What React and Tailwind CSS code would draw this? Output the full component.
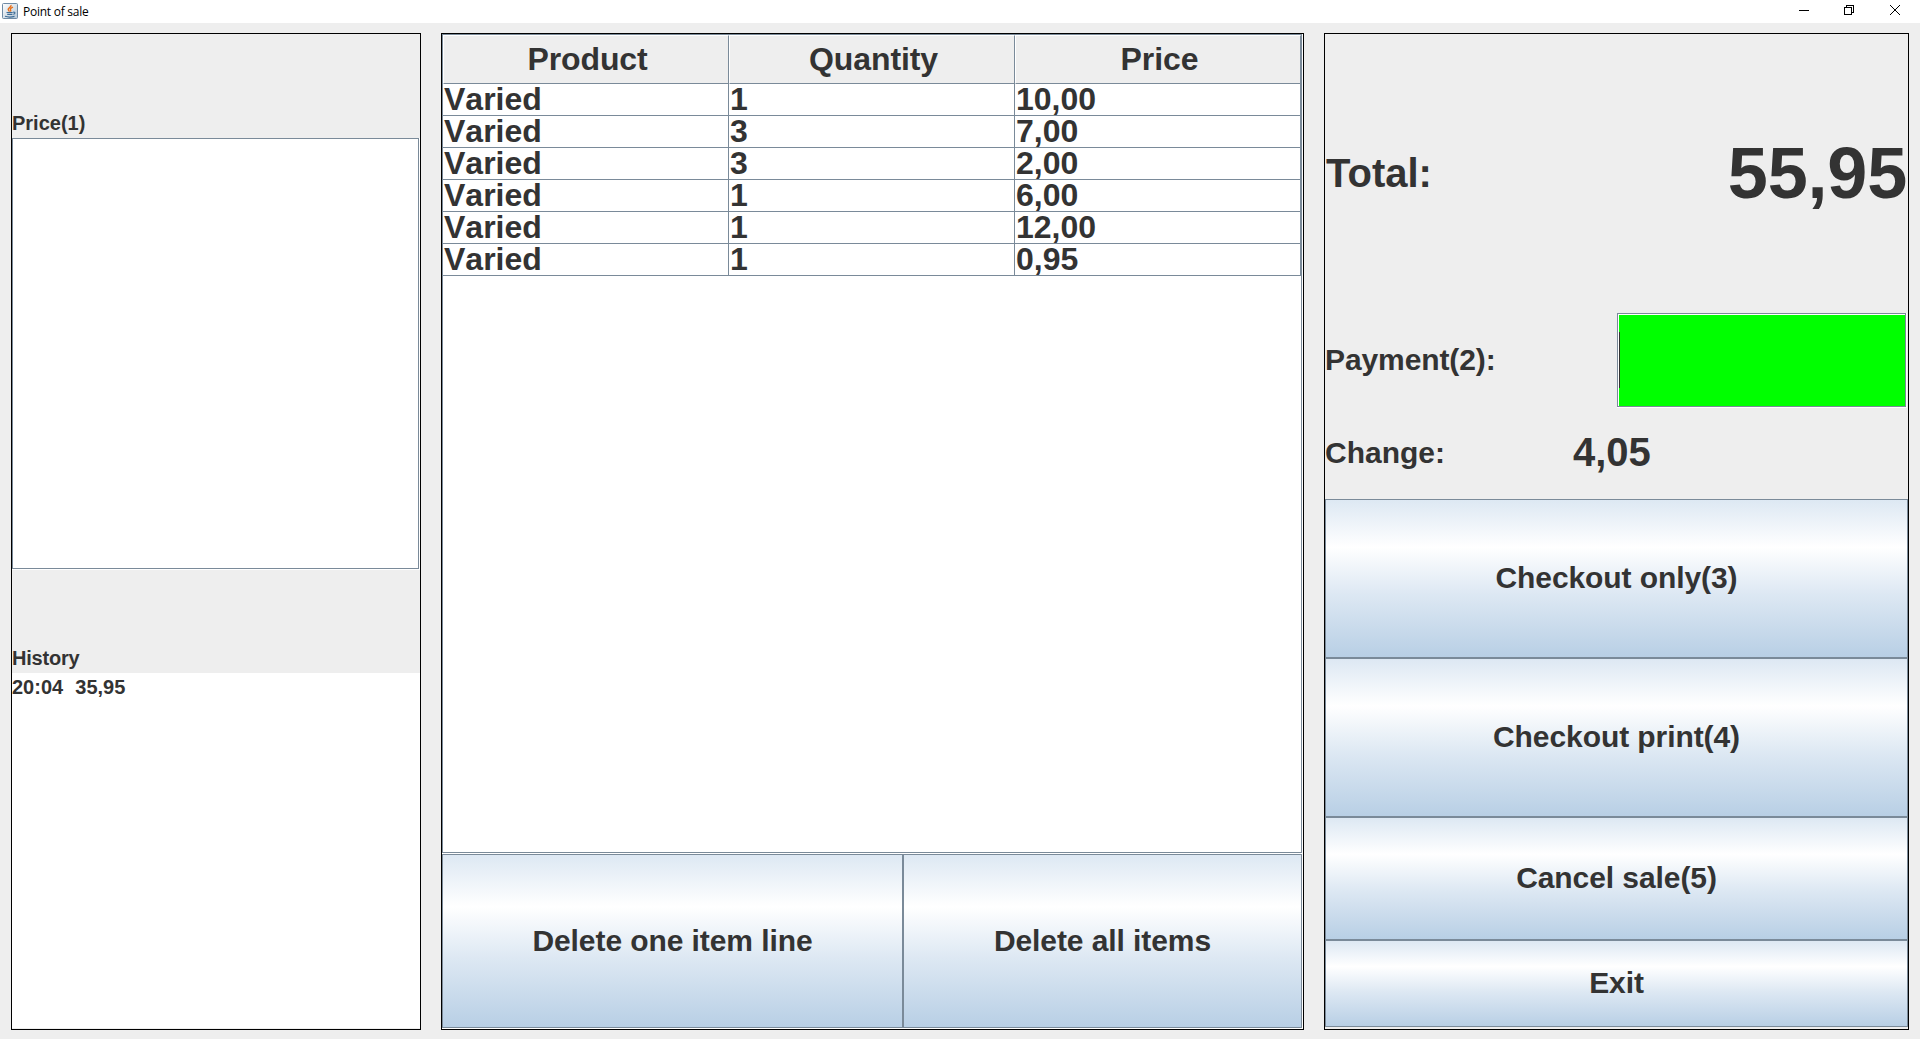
const items = [
  ["Varied", "1", "10,00"],
  ["Varied", "3", "7,00"],
  ["Varied", "3", "2,00"],
  ["Varied", "1", "6,00"],
  ["Varied", "1", "12,00"],
  ["Varied", "1", "0,95"],
];

function JavaIcon() {
  return (
    <svg className="ml-[2px] mt-[3px] h-4 w-4 shrink-0" viewBox="0 0 16 16" fill="none">
      <defs>
        <linearGradient id="tile" x1="0" y1="0" x2="1" y2="1">
          <stop offset="0" stopColor="#ffffff" />
          <stop offset="1" stopColor="#b4c6d6" />
        </linearGradient>
      </defs>
      <rect x="0.5" y="0.5" width="15" height="15" rx="1" fill="url(#tile)" stroke="#6f8ba5" />
      <path d="M9 2C9.800 4 5.800 5 6.200 6.600c.2.8 1 1.300 1.200 2M11 4.200C9 5 7.800 6 8.600 7.100c.4.6.2 1-.3 1.500" stroke="#e8701a" strokeWidth="1.4" />
      <path d="M4.500 9.500h6.200M5.200 11.300h5.200M3 13.300c2.500.8 6.800.8 9.500 0M11.200 9.300c2.200-.5 2.300 1.400.2 2.100" stroke="#3f6d96" strokeWidth="1.200" />
    </svg>
  );
}

function MetalButton({ children, className }) {
  return (
    <button
      className={`flex items-center justify-center border border-[#7a8a99] bg-[linear-gradient(to_bottom,#dde8f3_0%,#ffffff_30%,#dde8f3_60%,#b8cfe5_100%)] text-[30px] font-bold leading-none tracking-[-0.08px] ${className}`}
    >
      {children}
    </button>
  );
}

function TitleBar() {
  return (
    <header className="flex h-[23px] shrink-0 justify-between bg-white text-black">
      <div className="flex">
        <JavaIcon />
        <span className="ml-[5px] font-['Open_Sans','Noto_Sans',sans-serif] text-[12px] leading-[23px] tracking-[-0.25px]">
          Point of sale
        </span>
      </div>
      <div className="flex pr-[20px] pt-[5px]">
        <svg className="mr-[35px] h-[11px] w-[10px]" viewBox="0 0 10 11" shapeRendering="crispEdges">
          <path d="M0 5.500h10" stroke="#000" />
        </svg>
        <svg className="mr-[36px] h-[10px] w-[10px]" viewBox="0 0 10 10" fill="none" stroke="#000" shapeRendering="crispEdges">
          <path d="M.5 2.500h7v7h-7zM2.500 2.500v-2h7v7h-2" />
        </svg>
        <svg className="h-[10px] w-[10px]" viewBox="0 0 10 10" stroke="#000" strokeWidth="1">
          <path d="M0 0l10 10M10 0L0 10" />
        </svg>
      </div>
    </header>
  );
}

function EntryPanel() {
  return (
    <section className="flex w-[410px] flex-col border border-black text-[20px] font-bold leading-6">
      <div className="flex h-[104px] items-end pb-[3px]">Price(1)</div>
      <div className="h-[432px] border-b border-r border-white">
        <div className="h-full border border-[#7a8a99] bg-white" />
      </div>
      <div className="flex h-[103px] items-end pb-[3px] tracking-[-0.2px]">History</div>
      <div className="mb-px flex-1 whitespace-pre bg-white pt-[2px] [word-spacing:0.5px]">{"20:04  35,95"}</div>
    </section>
  );
}

function ItemsPanel() {
  return (
    <section className="flex w-[863px] flex-col border border-black bg-white pb-px pr-px font-bold">
      <div className="h-[819px] border border-[#7a8a99] text-[32px] leading-[30px] [font-kerning:none]">
        <div className="grid h-[49px] w-[858px] grid-cols-3 grid-rows-1">
          {["Product", "Quantity", "Price"].map((h) => (
            <div
              key={h}
              className="flex items-center justify-center border border-b-[#7a8a99] border-l-white border-r-[#7a8a99] border-t-white bg-[#eeeeee] pb-px pl-[3px] tracking-[-0.1px]"
            >
              {h}
            </div>
          ))}
        </div>
        {items.map((row, i) => (
          <div key={i} className="grid h-8 w-[858px] grid-cols-3 grid-rows-1">
            {row.map((cell, j) => (
              <div key={j} className="flex items-start border-b border-r border-[#7a8a99] pl-px">
                {cell}
              </div>
            ))}
          </div>
        ))}
      </div>
      <div className="mt-px flex h-[174px]">
        <MetalButton className="w-[461px]">Delete one item line</MetalButton>
        <MetalButton className="flex-1">Delete all items</MetalButton>
      </div>
    </section>
  );
}

function CheckoutPanel() {
  return (
    <section className="flex w-[585px] flex-col border border-black font-bold leading-none">
      <div className="flex h-[279px] items-center justify-between pb-[2px] pl-px pr-px">
        <span className="text-[40px]">Total:</span>
        <span className="text-[72px] tracking-[-0.2px]">55,95</span>
      </div>
      <div className="flex h-[95px] items-center justify-between pr-px">
        <span className="pb-[2px] text-[30px] tracking-[-0.1px]">Payment(2):</span>
        <div className="h-full w-[290px] border-b border-r border-white">
          <div className="h-full border border-[#7a8a99] bg-white pl-px pt-px">
            <div className="flex h-full items-start bg-[#00ff00] pt-[17px]">
              <div className="h-14 w-px bg-[#333333]" />
            </div>
          </div>
        </div>
      </div>
      <div className="flex h-[91px] items-center pb-[2px]">
        <span className="w-[248px] text-[30px]">Change:</span>
        <span className="pb-px text-[40px]">4,05</span>
      </div>
      <MetalButton className="h-[159px] pb-[2px]">Checkout only(3)</MetalButton>
      <MetalButton className="h-[159px] pb-[2px]">Checkout print(4)</MetalButton>
      <MetalButton className="h-[123px] pb-[2px]">Cancel sale(5)</MetalButton>
      <MetalButton className="h-[87px] pb-[2px]">Exit</MetalButton>
    </section>
  );
}

export default function App() {
  return (
    <div className="flex h-[1039px] w-[1920px] flex-col overflow-hidden bg-[#eeeeee] font-['Liberation_Sans',Arial,sans-serif] text-[#333333]">
      <TitleBar />
      <main className="flex h-[1007px] gap-5 pl-[11px] pt-[10px]">
        <EntryPanel />
        <ItemsPanel />
        <CheckoutPanel />
      </main>
    </div>
  );
}
